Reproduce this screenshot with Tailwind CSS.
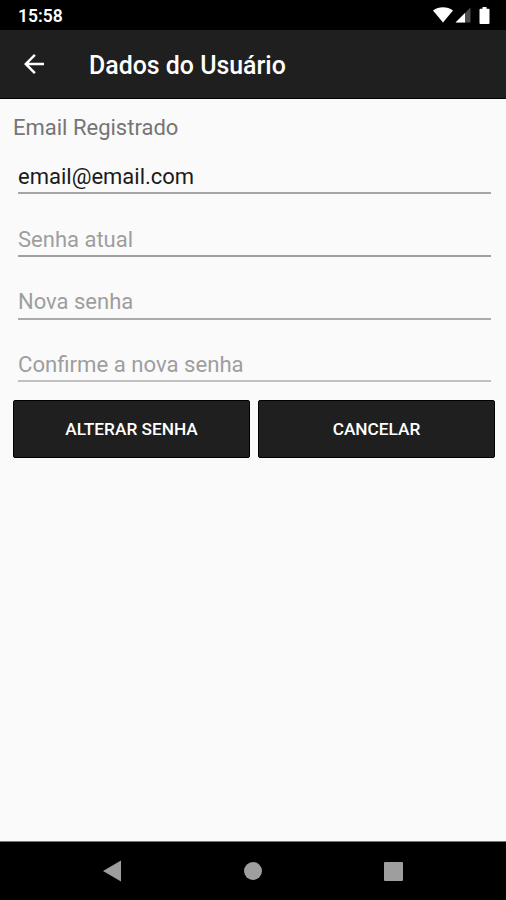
<!DOCTYPE html>
<html lang="pt-BR">
<head>
    <meta charset="UTF-8">
    <meta name="viewport" content="width=device-width, initial-scale=1.0">
    <title>Dados do Usuário</title>
    <script src="https://cdn.jsdelivr.net/npm/@tailwindcss/browser@4"></script>
</head>
<body class="bg-[#fafafa] font-['Roboto',sans-serif]">
    <div class="flex flex-col h-screen overflow-hidden">
        <!-- Status bar -->
        <div class="h-[30px] shrink-0 bg-black flex items-center justify-between pl-[18px] pr-[16px] text-white">
            <span class="text-[17.5px] font-semibold leading-none pt-[3px]">15:58</span>
            <div class="flex items-center">
                <svg class="w-[20px] h-[16px]" viewBox="0 0 20 16" fill="#fff"><path d="M0 3.5C6-.8 14-.8 20 3.5L10 15.5z"/></svg>
                <svg class="w-[16px] h-[16px] ml-[2px]" viewBox="0 0 16 16"><path d="M15.5 .5v15H.5z" fill="#fff" fill-opacity=".3"/><path d="M10 6v9.5H.5z" fill="#fff"/></svg>
                <svg class="w-[11px] h-[17px] ml-[8px]" viewBox="0 0 11 17" fill="#fff"><path d="M3.5 0h4v1.7h2a1 1 0 0 1 1 1V16a1 1 0 0 1-1 1h-8a1 1 0 0 1-1-1V2.7a1 1 0 0 1 1-1h2z"/></svg>
            </div>
        </div>

        <!-- App bar -->
        <header class="h-[69px] shrink-0 bg-[#1f1f1f] border-b border-black flex items-center pl-[19px] text-white">
            <button type="button" aria-label="Voltar">
                <svg class="w-[30px] h-[30px]" viewBox="0 0 24 24" fill="#fff"><path d="M20 11H7.83l5.59-5.59L12 4l-8 8 8 8 1.41-1.41L7.83 13H20z"/></svg>
            </button>
            <h1 class="ml-[40px] pt-[5px] text-[24.9px] font-medium leading-none">Dados do Usuário</h1>
        </header>

        <!-- Form -->
        <form class="flex-1 pl-[13px] pr-[11px] text-[22px]">
            <p class="h-[57px] flex items-center text-[#757575]">Email Registrado</p>
            <div class="h-[38px] ml-[5px] mr-[4px] pt-[4px] border-b-2 border-[#a6a6a6] flex items-center text-[#1a1a1a]">email@email.com</div>
            <div class="h-[63px] ml-[5px] mr-[4px] pt-[29px] border-b-2 border-[#a0a0a0] flex items-center text-[#9e9e9e]">Senha atual</div>
            <div class="h-[63px] ml-[5px] mr-[4px] pt-[28px] border-b-2 border-[#ababab] flex items-center text-[#9e9e9e]">Nova senha</div>
            <div class="h-[62px] ml-[5px] mr-[4px] pt-[29px] border-b-2 border-[#c0c0c0] flex items-center text-[22.15px] text-[#9e9e9e]">Confirme a nova senha</div>
            <div class="grid grid-cols-2 gap-[8px] mt-[18px] text-[17.25px] font-medium text-white">
                <button type="button" class="h-[58px] pt-[2px] bg-[#1f1f1f] border border-black rounded-[2px]">ALTERAR SENHA</button>
                <button type="button" class="h-[58px] pt-[2px] bg-[#1f1f1f] border border-black rounded-[2px]">CANCELAR</button>
            </div>
        </form>

        <!-- Navigation bar -->
        <nav class="h-[59px] shrink-0 bg-black border-t border-[#777] flex items-center justify-between px-[103px]">
            <svg class="w-[19px] h-[22px]" viewBox="0 0 19 22" fill="#9e9e9e"><path d="M0 11L18 .5v21z"/></svg>
            <svg class="w-[18px] h-[18px]" viewBox="0 0 18 18" fill="#9e9e9e"><circle cx="9" cy="9" r="9"/></svg>
            <svg class="w-[19px] h-[19px]" viewBox="0 0 19 19" fill="#9e9e9e"><rect width="19" height="19" rx="1"/></svg>
        </nav>
    </div>
</body>
</html>
